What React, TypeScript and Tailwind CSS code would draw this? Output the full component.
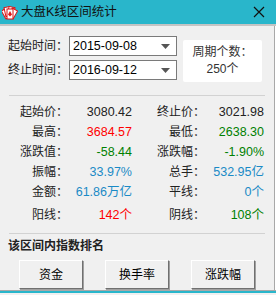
// Index K-line range statistics dialog

import React from 'react';

const font = "font-['Liberation_Sans','Noto_Sans_CJK_SC',sans-serif]";

type Stat = { label: string; value: string; color: string };

const rows: [Stat, Stat][] = [
  [
    { label: '起始价：', value: '3080.42', color: 'text-[#222]' },
    { label: '终止价：', value: '3021.98', color: 'text-[#222]' },
  ],
  [
    { label: '最高：', value: '3684.57', color: 'text-[#ff0000]' },
    { label: '最低：', value: '2638.30', color: 'text-[#008000]' },
  ],
  [
    { label: '涨跌值：', value: '-58.44', color: 'text-[#008000]' },
    { label: '涨跌幅：', value: '-1.90%', color: 'text-[#008000]' },
  ],
  [
    { label: '振幅：', value: '33.97%', color: 'text-[#1a8ac6]' },
    { label: '总手：', value: '532.95亿', color: 'text-[#1a8ac6]' },
  ],
  [
    { label: '金额：', value: '61.86万亿', color: 'text-[#1a8ac6]' },
    { label: '平线：', value: '0个', color: 'text-[#1a8ac6]' },
  ],
  [
    { label: '阳线：', value: '142个', color: 'text-[#ff0000]' },
    { label: '阴线：', value: '108个', color: 'text-[#008000]' },
  ],
];

const CardsIcon = () => (
  <svg width="16" height="15" viewBox="0 0 16 15">
    <g stroke="#d11" strokeWidth="1" fill="#fff">
      <rect x="1" y="4" width="6" height="9" transform="rotate(-30 4 8)" />
      <rect x="3" y="2" width="6" height="9" transform="rotate(-12 6 7)" />
      <rect x="6" y="2" width="6" height="9" transform="rotate(12 9 7)" />
      <rect x="8" y="4" width="6" height="9" transform="rotate(30 11 8)" />
      <rect x="5" y="4" width="6" height="10" fill="#fff" />
    </g>
    <path d="M8 6 L10 9.5 L8 11.5 L6 9.5 Z" fill="#e01818" />
  </svg>
);

const DateSelect = ({ value }: { value: string }) => (
  <div className="flex h-[20px] w-[108px] items-center justify-between border border-[#7a7a7a] bg-white pl-[3px] pr-[6px]">
    <span className="text-[12.5px] text-black">{value}</span>
    <svg width="9" height="5" viewBox="0 0 9 5">
      <path d="M0 0 H9 L4.5 5 Z" fill="#555" />
    </svg>
  </div>
);

const Btn = ({ text }: { text: string }) => (
  <button className="h-[29px] w-[64px] border border-t-white border-l-white border-r-[#707070] border-b-[#707070] bg-[#f0f0f0] text-[12px] text-black shadow-[1px_1px_0_#a0a0a0]">
    {text}
  </button>
);

export default function App() {
  return (
    <div className={`flex h-[295px] w-[276px] flex-col bg-white ${font}`}>
      {/* Title bar */}
      <div className="flex h-[24px] shrink-0 items-center bg-[#29b6cb] pl-[2px] pr-[11px]">
        <CardsIcon />
        <span className="ml-[3px] text-[12.5px] font-normal text-[#111]">大盘K线区间统计</span>
        <svg className="ml-auto" width="12" height="12" viewBox="0 0 12 12">
          <path d="M1 1 L11 11 M11 1 L1 11" stroke="#111" strokeWidth="1.2" />
        </svg>
      </div>
      <div className="h-[2px] shrink-0 bg-[#c4c4c4]" />

      {/* Body */}
      <div className="flex w-[275px] flex-1 flex-col border-r border-[#a8a8a8] bg-[#f0f0f0] text-[12px]">
        <div className="flex pl-[8px] pt-[10px]">
          <div className="flex flex-col gap-[4px]">
            <div className="flex items-center">
              <span className="w-[61px] text-[#222]">起始时间：</span>
              <DateSelect value="2015-09-08" />
            </div>
            <div className="flex items-center">
              <span className="w-[61px] text-[#222]">终止时间：</span>
              <DateSelect value="2016-09-12" />
            </div>
          </div>
          <div className="ml-[6px] mt-[4px] flex h-[42px] w-[79px] flex-col items-center justify-center gap-[2px] rounded-[2px] bg-white text-[12px] leading-[15px] text-[#333]">
            <span>周期个数：</span>
            <span>250个</span>
          </div>
        </div>

        <div className="mx-[9px] mt-[13px] h-px w-[256px] bg-[#d2d2d2]" />

        <div className="mt-[6px] flex flex-col pl-[8px]">
          {rows.map(([a, b], i) => (
            <div key={i} className={`flex h-[20px] items-center ${i === 5 ? 'mt-[3px]' : ''}`}>
              <span className="w-[60px] text-right text-[#222]">{a.label}</span>
              <span className={`w-[64px] text-right text-[12.5px] ${a.color}`}>{a.value}</span>
              <span className="w-[73px] text-right text-[#222]">{b.label}</span>
              <span className={`w-[59px] text-right text-[12.5px] ${b.color}`}>{b.value}</span>
            </div>
          ))}
        </div>

        <div className="mx-[9px] mt-[8px] h-px w-[256px] bg-[#d2d2d2]" />

        <div className="mt-[4px] pl-[8px] text-[12px] font-bold leading-[16px] text-[#222]">该区间内指数排名</div>

        <div className="mt-[6px] flex gap-[22px] pl-[19px]">
          <Btn text="资金" />
          <Btn text="换手率" />
          <Btn text="涨跌幅" />
        </div>
      </div>
      <div className="h-px shrink-0 bg-[#a8a8a8]" />
      <div className="h-[2px] shrink-0 bg-[#29b6cb]" />
      <div className="h-[2px] shrink-0 bg-[#f0f0f0]" />
    </div>
  );
}
